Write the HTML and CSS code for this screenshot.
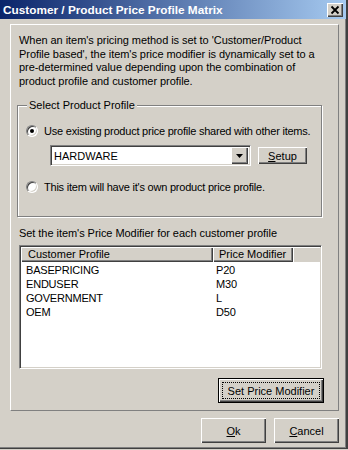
FILE: index.html
```html
<!DOCTYPE html>
<html lang="en">
<head>
    <meta charset="UTF-8">
    <title>Customer / Product Price Profile Matrix</title>
    <link rel="stylesheet" href="styles.css">
</head>
<body>
    <div class="window">
        <div class="titlebar">
            <span class="title">Customer / Product Price Profile Matrix</span>
            <span class="close-btn">
                <svg width="16" height="14" viewBox="0 0 16 14">
                    <path d="M4.5 3.5 L11.5 10.5 M11.5 3.5 L4.5 10.5" stroke="#000" stroke-width="1.8" fill="none"/>
                </svg>
            </span>
        </div>

        <div class="frame">
            <p class="intro">When an item's pricing method is set to 'Customer/Product Profile based', the item's price modifier is dynamically set to a pre-determined value depending upon the combination of product profile and customer profile.</p>

            <div class="group">
                <span class="group-title">Select Product Profile</span>

                <div class="radio-row first">
                    <span class="radio checked"></span>
                    <span>Use existing product price profile shared with other items.</span>
                </div>

                <div class="combo-row">
                    <div class="combo">
                        <span class="combo-text">HARDWARE</span>
                        <span class="drop-btn">
                            <svg width="7" height="4" viewBox="0 0 7 4"><path d="M0 0 H7 L3.5 4 Z" fill="#000"/></svg>
                        </span>
                    </div>
                    <button class="btn setup-btn"><u>S</u>etup</button>
                </div>

                <div class="radio-row second">
                    <span class="radio"></span>
                    <span>This item will have it's own product price profile.</span>
                </div>
            </div>

            <p class="list-label">Set the item's Price Modifier for each customer profile</p>

            <div class="listview">
                <div class="lv-header">
                    <span class="lv-col col-profile">Customer Profile</span>
                    <span class="lv-col col-modifier">Price Modifier</span>
                    <span class="lv-col col-rest"></span>
                </div>
                <div class="lv-rows">
                    <div class="lv-row"><span class="cell-profile">BASEPRICING</span><span>P20</span></div>
                    <div class="lv-row"><span class="cell-profile">ENDUSER</span><span>M30</span></div>
                    <div class="lv-row"><span class="cell-profile">GOVERNMENT</span><span>L</span></div>
                    <div class="lv-row"><span class="cell-profile">OEM</span><span>D50</span></div>
                </div>
            </div>

            <div class="modifier-row">
                <button class="btn btn-default"><span class="focus">Set Price Modifier</span></button>
            </div>
        </div>

        <div class="dialog-buttons">
            <button class="btn dialog-btn"><u>O</u>k</button>
            <button class="btn dialog-btn"><u>C</u>ancel</button>
        </div>
    </div>
</body>
</html>
```

FILE: styles.css
```css
body {
    margin: 0;
    padding: 0;
    background: #d4d0c8;
    font-family: 'Liberation Sans', Arial, sans-serif;
    font-size: 11px;
    color: #000;
}

.window {
    width: 348px;
    height: 449px;
    box-sizing: border-box;
    background: #d4d0c8;
    border-right: 2px solid #404040;
    border-bottom: 1px solid #404040;
    box-shadow: inset -1px -1px 0 #808080;
}

.titlebar {
    height: 19px;
    display: flex;
    align-items: center;
    justify-content: space-between;
    padding: 0 3px;
    background: linear-gradient(90deg, #0a246a, #a6caf0);
}

.title {
    color: #fff;
    font-weight: bold;
    font-size: 11.8px;
}

.close-btn {
    width: 16px;
    height: 14px;
    box-sizing: border-box;
    display: flex;
    background: #d4d0c8;
    box-shadow: inset 1px 1px 0 #fff, inset -1px -1px 0 #404040, inset -2px -2px 0 #808080;
}

.frame {
    margin: 5px 0 0 10px;
    width: 329px;
    height: 387px;
    box-sizing: border-box;
    padding: 0 14px 0 6px;
    border: 1px solid;
    border-color: #fff #808080 #808080 #fff;
}

.intro {
    margin: 9px 0 0 2px;
    line-height: 13.5px;
    letter-spacing: -0.05px;
}

.group {
    position: relative;
    margin-top: 17px;
    width: 305px;
    height: 112px;
    box-sizing: border-box;
    border: 1px solid #808080;
    box-shadow: inset 1px 1px 0 #fff, 1px 1px 0 #fff;
    padding-top: 17px;
}

.group-title {
    position: absolute;
    top: -7px;
    left: 9px;
    padding: 0 2px;
    line-height: 13px;
    background: #d4d0c8;
}

.radio-row {
    display: flex;
    align-items: center;
    height: 16px;
    gap: 6px;
    padding-left: 8px;
    white-space: nowrap;
    letter-spacing: -0.22px;
}

.radio-row.second {
    margin-top: 13px;
}

.radio {
    flex: none;
    width: 12px;
    height: 12px;
    box-sizing: border-box;
    border-radius: 50%;
    border: 1px solid;
    border-color: #808080 #fff #fff #808080;
    background: #fff;
    box-shadow: inset 1px 1px 0 #404040, inset -1px -1px 0 #d4d0c8;
    display: flex;
    align-items: center;
    justify-content: center;
}

.radio.checked::after {
    content: "";
    width: 4px;
    height: 4px;
    border-radius: 50%;
    background: #000;
}

.combo-row {
    display: flex;
    align-items: center;
    margin: 6px 0 0 32px;
}

.combo {
    width: 201px;
    height: 21px;
    box-sizing: border-box;
    display: flex;
    align-items: center;
    justify-content: space-between;
    background: #fff;
    border: 1px solid;
    border-color: #808080 #fff #fff #808080;
    box-shadow: inset 1px 1px 0 #404040, inset -1px -1px 0 #d4d0c8;
    padding: 2px 2px 2px 3px;
}

.drop-btn {
    width: 17px;
    height: 17px;
    box-sizing: border-box;
    display: flex;
    align-items: center;
    justify-content: center;
    background: #d4d0c8;
    box-shadow: inset 1px 1px 0 #fff, inset -1px -1px 0 #404040, inset -2px -2px 0 #808080;
}

.btn {
    font-family: 'Liberation Sans', Arial, sans-serif;
    font-size: 11px;
    color: #000;
    background: #d4d0c8;
    border: none;
    padding: 0;
    box-shadow: inset 1px 1px 0 #fff, inset -1px -1px 0 #404040, inset -2px -2px 0 #808080;
}

.setup-btn {
    width: 49px;
    height: 17px;
    margin-left: 7px;
}

.list-label {
    margin: 10px 0 0 2px;
    line-height: 13px;
    letter-spacing: -0.05px;
}

.listview {
    margin: 5px 0 0 2px;
    width: 303px;
    height: 124px;
    box-sizing: border-box;
    background: #fff;
    border: 1px solid;
    border-color: #808080 #fff #fff #808080;
    box-shadow: inset 1px 1px 0 #404040, inset -1px -1px 0 #d4d0c8;
    padding: 1px;
}

.lv-header {
    display: flex;
    height: 15px;
}

.lv-col {
    box-sizing: border-box;
    height: 15px;
    line-height: 14px;
    background: #d4d0c8;
    box-shadow: inset 1px 1px 0 #fff, inset -1px -1px 0 #404040, inset -2px -2px 0 #808080;
}

.col-profile {
    width: 192px;
    padding-left: 7px;
}

.col-modifier {
    width: 80px;
    padding-left: 6px;
}

.col-rest {
    flex: 1;
    box-shadow: inset 1px 1px 0 #fff;
}

.lv-rows {
    padding-top: 1px;
}

.lv-row {
    display: flex;
    line-height: 14px;
    letter-spacing: -0.2px;
}

.cell-profile {
    width: 190px;
    padding-left: 5px;
}

.modifier-row {
    display: flex;
    justify-content: flex-end;
    margin-top: 9px;
}

.btn-default {
    width: 106px;
    height: 25px;
    box-sizing: border-box;
    border: 1px solid #000;
    padding: 3px;
    display: flex;
}

.focus {
    flex: 1;
    display: flex;
    align-items: center;
    justify-content: center;
    border: 1px dotted #000;
}

.dialog-buttons {
    display: flex;
    justify-content: flex-end;
    gap: 8px;
    margin-top: 7px;
    padding-right: 7px;
}

.dialog-btn {
    width: 65px;
    height: 25px;
}
```
